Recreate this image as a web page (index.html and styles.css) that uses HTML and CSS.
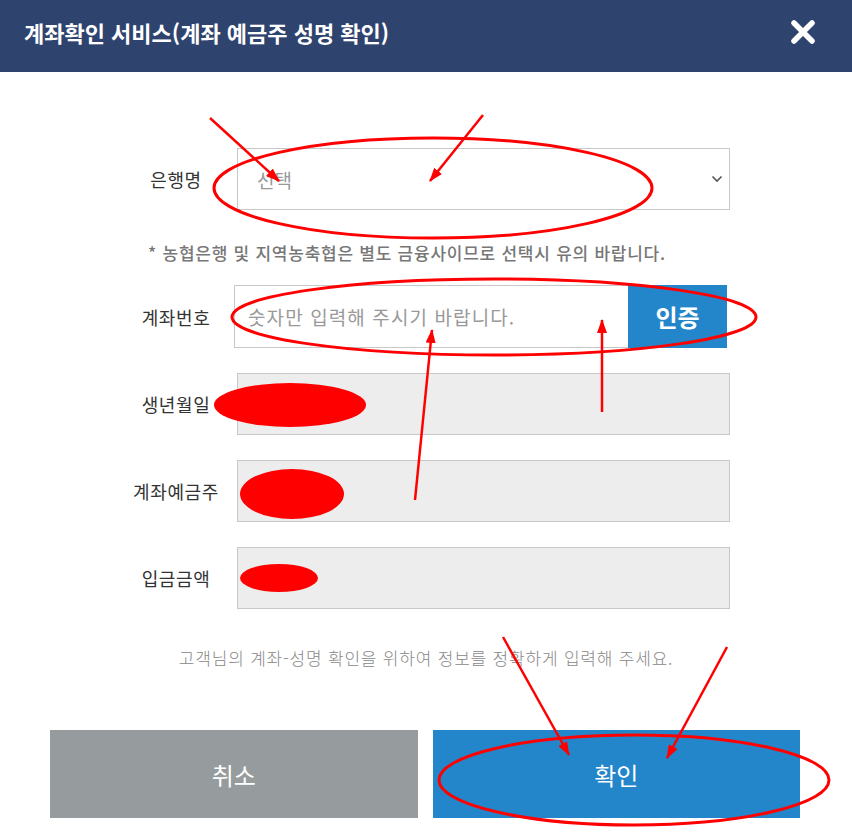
FILE: index.html
```html
<!DOCTYPE html>
<html lang="ko">
<head>
    <meta charset="UTF-8">
    <meta name="viewport" content="width=device-width, initial-scale=1.0">
    <title>계좌확인 서비스</title>
    <link rel="stylesheet" href="styles.css">
</head>
<body>
    <div class="popup">
        <header class="popup-head">
            <h1>계좌확인 서비스(계좌 예금주 성명 확인)</h1>
            <button class="close-btn" type="button" aria-label="닫기">
                <svg width="26" height="26" viewBox="0 0 26 26">
                    <path d="M4 4 L22 22 M22 4 L4 22" stroke="#fff" stroke-width="5.5" stroke-linecap="round"/>
                </svg>
            </button>
        </header>

        <form class="account-form">
            <label class="field-label" for="bank">은행명</label>
            <div class="select-box">
                <select id="bank">
                    <option>선택</option>
                </select>
                <svg class="chevron" width="12" height="8" viewBox="0 0 12 8">
                    <path d="M1.5 1.5 L6 6 L10.5 1.5" fill="none" stroke="#555" stroke-width="1.6"/>
                </svg>
            </div>

            <p class="notice">* 농협은행 및 지역농축협은 별도 금융사이므로 선택시 유의 바랍니다.</p>

            <label class="field-label" for="accountNo">계좌번호</label>
            <div class="account-box">
                <input type="text" id="accountNo" placeholder="숫자만 입력해 주시기 바랍니다.">
                <button type="button" class="verify-btn">인증</button>
            </div>

            <label class="field-label">생년월일</label>
            <div class="readonly-box"></div>

            <label class="field-label">계좌예금주</label>
            <div class="readonly-box"></div>

            <label class="field-label">입금금액</label>
            <div class="readonly-box"></div>
        </form>

        <p class="guide">고객님의 계좌-성명 확인을 위하여 정보를 정확하게 입력해 주세요.</p>

        <div class="actions">
            <button type="button" class="btn btn-cancel">취소</button>
            <button type="button" class="btn btn-ok">확인</button>
        </div>

        <!-- 캡처 위에 그려진 표시 -->
        <svg class="marks" width="852" height="833" viewBox="0 0 852 833">
            <defs>
                <marker id="head" markerWidth="14" markerHeight="10" refX="13" refY="5" orient="auto" markerUnits="userSpaceOnUse" viewBox="0 0 14 10">
                    <path d="M0 0 L14 5 L0 10 Z" fill="#f00"/>
                </marker>
            </defs>
            <g fill="none" stroke="#f00" stroke-width="3">
                <ellipse cx="433" cy="188" rx="219" ry="50"/>
                <ellipse cx="494" cy="317" rx="262" ry="38"/>
                <ellipse cx="634" cy="780" rx="195" ry="45"/>
            </g>
            <g stroke="#f00" stroke-width="2.5" marker-end="url(#head)">
                <line x1="210" y1="118" x2="279" y2="181"/>
                <line x1="483" y1="115" x2="430" y2="181"/>
                <line x1="415" y1="500" x2="432" y2="330"/>
                <line x1="602" y1="412" x2="602" y2="320"/>
                <line x1="503" y1="637" x2="569" y2="755"/>
                <line x1="727" y1="647" x2="667" y2="758"/>
            </g>
            <g fill="#f00">
                <ellipse cx="290" cy="405" rx="76" ry="22"/>
                <ellipse cx="292" cy="494" rx="52" ry="25"/>
                <ellipse cx="279" cy="578" rx="39" ry="14"/>
            </g>
        </svg>
    </div>
</body>
</html>
```

FILE: styles.css
```css
* {
    box-sizing: border-box;
    margin: 0;
    padding: 0;
    font-family: 'Noto Sans CJK KR', 'Noto Sans', sans-serif;
}

body {
    background-color: #fff;
    color: #333;
}

.popup {
    position: relative;
    width: 852px;
    height: 833px;
    overflow: hidden;
}

.popup-head {
    height: 72px;
    background-color: #2e436e;
    display: flex;
    align-items: flex-start;
    justify-content: space-between;
    padding: 14px 36px 0 24px;
}

.popup-head h1 {
    color: #fff;
    font-size: 22px;
    font-weight: bold;
    letter-spacing: 0;
    line-height: 36px;
}

.close-btn {
    background: none;
    border: none;
    margin-top: 5px;
    cursor: pointer;
}

.account-form {
    display: grid;
    grid-template-columns: 112px 493px;
    column-gap: 5px;
    row-gap: 25px;
    margin: 76px 0 0 120px;
}

.field-label {
    display: flex;
    align-items: center;
    justify-content: center;
    font-size: 18px;
    letter-spacing: 0.6px;
    color: #333;
}

.select-box {
    position: relative;
    height: 62px;
}

.select-box select {
    width: 100%;
    height: 100%;
    border: 1px solid #c8c8c8;
    background-color: #fff;
    appearance: none;
    padding-left: 19px;
    font-size: 19px;
    color: #999;
}

.chevron {
    position: absolute;
    right: 7px;
    top: 27px;
}

.notice {
    grid-column: 1 / 3;
    margin: 6px 0 -5px 28px;
    font-size: 17px;
    line-height: 24px;
    font-weight: 500;
    letter-spacing: 0.75px;
    color: #777;
}

.account-box {
    display: flex;
    height: 63px;
    margin-left: -3px;
    margin-right: 3px;
}

.account-box input {
    flex: 1;
    border: 1px solid #c8c8c8;
    border-right: none;
    padding-left: 13px;
    font-size: 19px;
    letter-spacing: 1.1px;
    color: #333;
}

.account-box input::placeholder {
    color: #999;
}

.verify-btn {
    width: 99px;
    border: none;
    background-color: #2386cb;
    color: #fff;
    font-size: 24px;
    font-weight: bold;
}

.readonly-box {
    height: 62px;
    background-color: #ededed;
    border: 1px solid #c8c8c8;
}

.guide {
    margin-top: 37px;
    text-align: center;
    font-size: 17px;
    line-height: 24px;
    font-weight: 300;
    letter-spacing: 0.8px;
    color: #888;
}

.actions {
    display: flex;
    gap: 15px;
    margin: 60px 52px 0 50px;
}

.btn {
    flex: 1;
    height: 88px;
    border: none;
    color: #fff;
    font-size: 24px;
    cursor: pointer;
}

.btn-cancel {
    background-color: #969b9e;
}

.btn-ok {
    background-color: #2386cb;
}

.marks {
    position: absolute;
    top: 0;
    left: 0;
    pointer-events: none;
}
```
